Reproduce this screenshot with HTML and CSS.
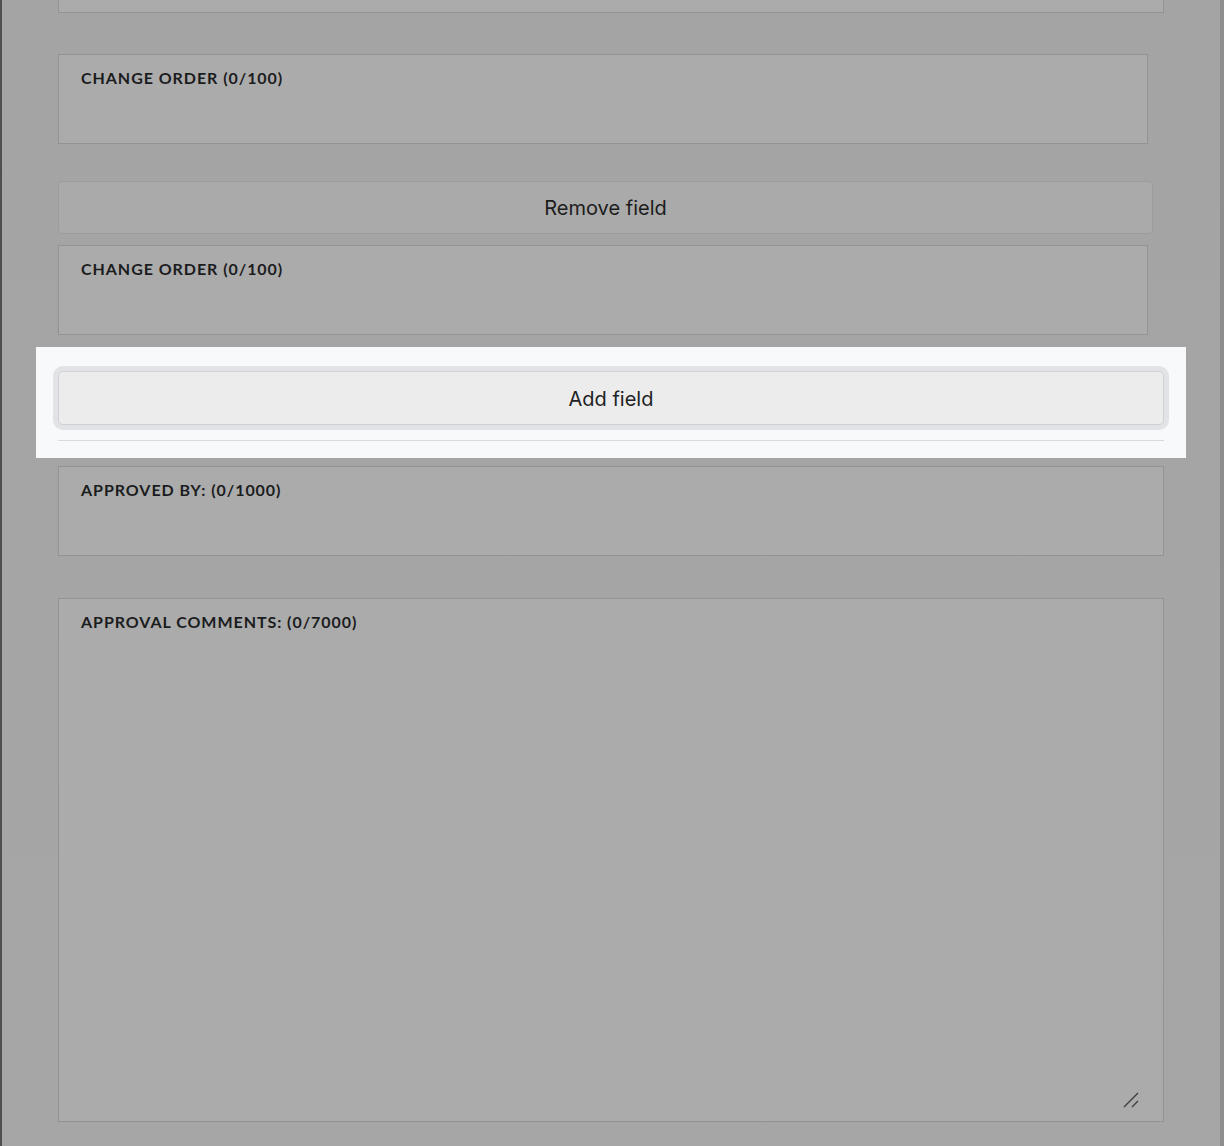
FILE: index.html
```html
<!DOCTYPE html>
<html lang="en">
<head>
<meta charset="utf-8">
<title>Form fields</title>
<link rel="stylesheet" href="styles.css">
</head>
<body>
<div class="frame">
  <div class="edge-left"></div>
  <main class="form">
    <div class="field stub"></div>

    <div class="field short first">
      <span class="label">CHANGE ORDER (0/100)</span>
    </div>

    <button class="btn remove" type="button">Remove field</button>

    <div class="field short after-remove">
      <span class="label">CHANGE ORDER (0/100)</span>
    </div>

    <section class="highlight">
      <button class="btn add" type="button">Add field</button>
      <div class="rule"></div>
    </section>

    <div class="field wide approved">
      <span class="label">APPROVED BY: (0/1000)</span>
    </div>

    <div class="field wide comments">
      <span class="label">APPROVAL COMMENTS: (0/7000)</span>
      <svg class="grip" width="16" height="16" viewBox="0 0 16 16" aria-hidden="true">
        <line x1="1" y1="15" x2="15" y2="1" stroke="#3c3c3c" stroke-width="1.2"/>
        <line x1="9" y1="15" x2="15" y2="9" stroke="#3c3c3c" stroke-width="1.2"/>
      </svg>
    </div>
  </main>
  <div class="edge-right"></div>
</div>
</body>
</html>
```

FILE: styles.css
```css
html, body {
  margin: 0;
  padding: 0;
  height: 100%;
  background: #a5a5a5;
  overflow: hidden;
}

.frame {
  display: flex;
  min-height: 1146px;
}

.edge-left {
  width: 2px;
  background: #4f4f4f;
  flex: none;
}

.edge-right {
  width: 4px;
  background: #8e8e8e;
  flex: none;
}

.form {
  flex: 1;
  display: flex;
  flex-direction: column;
  align-items: flex-start;
  padding: 0 56px 0 56px;
  background: linear-gradient(180deg, #a4a4a4 0%, #a6a6a6 100%);
}

.field {
  box-sizing: border-box;
  position: relative;
  background: #ababab;
  border: 1px solid #939393;
  padding: 13px 22px;
}

.stub {
  width: 1106px;
  height: 13px;
  border-top: none;
  padding: 0;
}

.short {
  width: 1090px;
  height: 90px;
}

.wide {
  width: 1106px;
}

.first {
  margin-top: 41px;
}

.after-remove {
  margin-top: 11px;
}

.approved {
  height: 90px;
  margin-top: 8px;
}

.comments {
  height: 524px;
  margin-top: 42px;
}

.label {
  display: block;
  font-family: "Lato", "Open Sans", sans-serif;
  font-weight: 700;
  font-size: 16px;
  line-height: 19px;
  letter-spacing: 0.95px;
  color: #1b1c1e;
}

.grip {
  position: absolute;
  right: 24px;
  bottom: 13px;
}

.btn {
  box-sizing: border-box;
  font-family: "Inter", "Noto Sans", sans-serif;
  font-size: 20px;
  font-weight: 400;
  cursor: pointer;
  margin: 0;
}

.remove {
  width: 1095px;
  height: 53px;
  margin-top: 37px;
  background: #aaaaaa;
  border: 1px solid #9c9c9c;
  border-radius: 4px;
  color: #1c1c1c;
}

.highlight {
  box-sizing: border-box;
  align-self: stretch;
  margin: 12px -22px 0 -22px;
  padding: 24px 22px 17px 22px;
  background: #f8f9fa;
  display: flex;
  flex-direction: column;
}

.add {
  width: 100%;
  height: 54px;
  padding-top: 2px;
  background: #ececec;
  border: 1px solid #cfd1d5;
  border-radius: 5px;
  box-shadow: 0 0 0 5px #e2e3e7;
  color: #212224;
}

.rule {
  margin-top: 15px;
  height: 1px;
  background: #d9dadd;
}
```
